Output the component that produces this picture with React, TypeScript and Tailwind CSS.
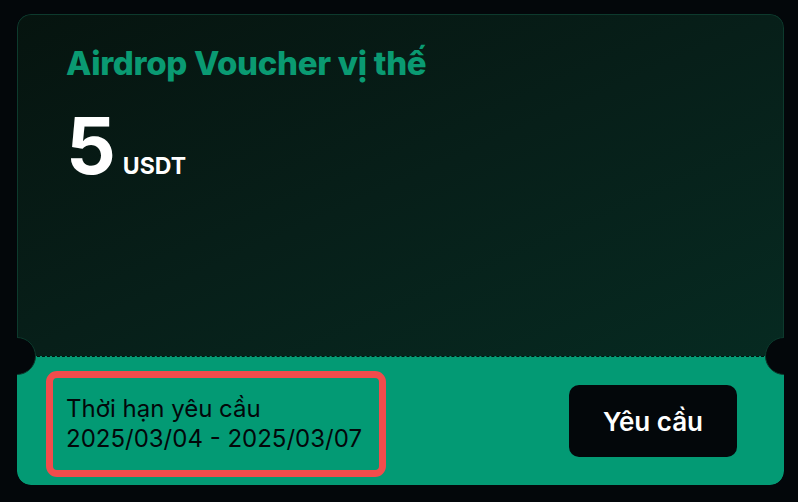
import React from "react";

export default function App() {
  return (
    <div
      className="w-[798px] h-[502px] bg-[#03070a] pt-[14px] pl-[17px] overflow-hidden"
      style={{ fontFamily: "Inter, 'Noto Sans', sans-serif" }}
    >
      <div className="relative w-[767px] h-[471px] flex flex-col rounded-[14px] overflow-hidden">
        <div className="h-[342px] rounded-t-[14px] border border-b-0 border-[#0d3a2d] bg-gradient-to-br from-[#06140f] via-[#071f19] to-[#062a21] pl-[48px] pt-[27px]">
          <div className="text-[33px] leading-[42px] font-extrabold tracking-[-0.3px] text-[#0a9a72]">
            Airdrop Voucher vị thế
          </div>
          <div className="flex items-baseline mt-[23px] text-white font-bold">
            <span className="text-[78px] leading-[78px] tracking-[-1px]">5</span>
            <span className="text-[23px] leading-[30px] ml-[8px]">USDT</span>
          </div>
        </div>
        <div className="flex-1 bg-[#039a74] border-t border-dashed border-[#03110c] flex items-center justify-between pl-[29px] pr-[47px] rounded-b-[14px]">
          <div className="mt-[6px] w-[340px] h-[106px] border-[7px] border-[#f24c4c] rounded-[11px] pl-[13px] flex flex-col justify-center text-[#03070a] text-[24px] leading-[30px]">
            <div>Thời hạn yêu cầu</div>
            <div>2025/03/04 - 2025/03/07</div>
          </div>
          <button className="w-[168px] h-[72px] rounded-[10px] bg-[#03070a] text-white text-[26px] font-semibold">
            Yêu cầu
          </button>
        </div>
        <div className="absolute left-[-19px] top-[323px] w-[38px] h-[38px] rounded-full bg-[#03070a] border border-[#0d3a2d]" />
        <div className="absolute right-[-19px] top-[323px] w-[38px] h-[38px] rounded-full bg-[#03070a] border border-[#0d3a2d]" />
      </div>
    </div>
  );
}
